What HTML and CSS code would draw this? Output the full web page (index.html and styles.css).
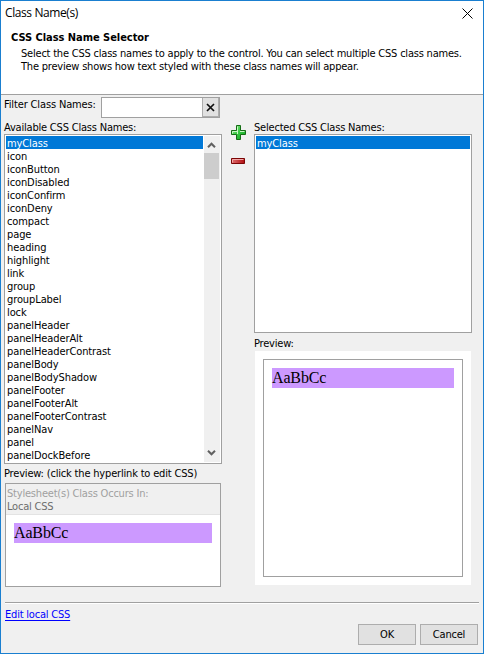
FILE: index.html
```html
<!DOCTYPE html>
<html lang="en">
<head>
<meta charset="utf-8">
<title>Class Name(s)</title>
<link rel="stylesheet" href="styles.css">
</head>
<body>
<div class="window">
  <header class="header">
    <div class="titlebar">
      <span class="title">Class Name(s)</span>
      <svg class="close" width="11" height="11" viewBox="0 0 11 11"><path d="M.5.5l10 10M10.5.5l-10 10" stroke="#000" fill="none"/></svg>
    </div>
    <h1 class="heading">CSS Class Name Selector</h1>
    <p class="intro">Select the CSS class names to apply to the control. You can select multiple CSS class names.<br>The preview shows how text styled with these class names will appear.</p>
  </header>
  <div class="filter">
    <span class="filter-label">Filter Class Names:</span>
    <div class="filter-input"><span class="clear"><svg width="9" height="9" viewBox="0 0 9 9"><path d="M1 1l7 7M8 1l-7 7" stroke="#111" stroke-width="1.7" fill="none"/></svg></span></div>
  </div>
  <main class="columns">
    <section class="left">
      <div class="label">Available CSS Class Names:</div>
      <div class="listbox available">
        <ul class="items">
          <li class="selected">myClass</li><li>icon</li><li>iconButton</li><li>iconDisabled</li><li>iconConfirm</li><li>iconDeny</li><li>compact</li><li>page</li><li>heading</li><li>highlight</li><li>link</li><li>group</li><li>groupLabel</li><li>lock</li><li>panelHeader</li><li>panelHeaderAlt</li><li>panelHeaderContrast</li><li>panelBody</li><li>panelBodyShadow</li><li>panelFooter</li><li>panelFooterAlt</li><li>panelFooterContrast</li><li>panelNav</li><li>panel</li><li>panelDockBefore</li>
        </ul>
        <div class="scrollbar">
          <svg class="arrow" width="15" height="17" viewBox="0 0 15 17"><path d="M4 11.3l3.5-3.6 3.5 3.6" stroke="#606060" stroke-width="2" fill="none"/></svg>
          <div class="thumb"></div>
          <svg class="arrow down" width="15" height="17" viewBox="0 0 15 17"><path d="M4 5.700l3.500 3.600L11 5.700" stroke="#606060" stroke-width="2" fill="none"/></svg>
        </div>
      </div>
      <div class="label hint">Preview: (click the hyperlink to edit CSS)</div>
      <div class="origin">
        <div class="origin-head"><div class="origin-title">Stylesheet(s) Class Occurs In:</div><div class="origin-name">Local CSS</div></div>
        <div class="origin-body"><div class="sample">AaBbCc</div></div>
      </div>
    </section>
    <div class="actions">
      <svg width="15" height="15" viewBox="0 0 15 15">
        <defs><linearGradient id="green" x2="1" y2="1"><stop offset="0" stop-color="#a4f0a0"/><stop offset=".45" stop-color="#3ccb45"/><stop offset="1" stop-color="#08a01c"/></linearGradient></defs>
        <path d="M5.5.5h4v5h5v4h-5v5h-4v-5h-5v-4h5z" fill="url(#green)" stroke="#146c14"/>
        <path d="M6.5 9V1.5M1.5 8.500V6.500h5M9 6.500h4.500" stroke="#c8f5c4" fill="none"/>
      </svg>
      <svg width="14" height="6" viewBox="0 0 14 6">
        <defs><linearGradient id="red" x2="1"><stop offset="0" stop-color="#e07070"/><stop offset="1" stop-color="#b00c10"/></linearGradient></defs>
        <path d="M.5.5h13v5H.5z" fill="url(#red)" stroke="#7b0505"/>
        <path d="M1.500 4.500v-3h11" stroke="#f3a9a9" fill="none"/>
      </svg>
    </div>
    <section class="right">
      <div class="label">Selected CSS Class Names:</div>
      <div class="listbox chosen"><ul class="items"><li class="selected">myClass</li></ul></div>
      <div class="label preview-label">Preview:</div>
      <div class="preview"><div class="preview-frame"><div class="sample">AaBbCc</div></div></div>
    </section>
  </main>
  <footer class="footer">
    <div><a class="link" href="#">Edit local CSS</a></div>
    <div class="buttons"><button class="ok">OK</button><button>Cancel</button></div>
  </footer>
</div>
</body>
</html>
```
FILE: styles.css
```css
* { box-sizing: border-box; }
body { margin: 0; font: 11px/13px "DejaVu Sans Condensed", "DejaVu Sans", sans-serif; font-stretch: condensed; letter-spacing: -0.2px; color: #000; }
.window { width: 484px; height: 654px; border: 1px solid #1a7fd0; background: #f0f0f0; }
.header { height: 94px; background: #fff; border-bottom: 1px solid #a0a0a0; }
.titlebar { display: flex; justify-content: space-between; height: 28px; padding: 4px 10px 0 4px; }
.title { font: 12px/16px "Open Sans", sans-serif; letter-spacing: -0.4px; }
.close { margin-top: 3px; }
.heading { margin: 2px 0 0 10px; font-size: 11px; line-height: 13px; font-weight: bold; letter-spacing: -0.04px; }
.intro { margin: 3px 0 0 20px; white-space: nowrap; letter-spacing: -0.21px; }
.filter { display: flex; height: 24px; padding: 2px 0 0 3px; }
.filter-label { width: 97px; padding-top: 1px; white-space: nowrap; letter-spacing: -0.14px; }
.filter-input { display: flex; justify-content: flex-end; width: 119px; height: 21px; border: 1px solid #a0a0a0; background: #fff; }
.clear { display: flex; align-items: center; justify-content: center; width: 17px; background: #e1e1e1; border: solid #adadad; border-width: 0 1px 1px; }
.columns { display: flex; height: 482px; padding-left: 3px; }
.left { width: 218px; }
.label { height: 15px; padding-top: 2px; white-space: nowrap; }
.listbox { width: 218px; border: 1px solid #a0a0a0; background: #fff; display: flex; padding: 1px; }
.available { height: 330px; }
.items { flex: 1; margin: 0; padding: 0; list-style: none; letter-spacing: -0.1px; }
.items li { height: 13px; padding-left: 1px; line-height: 15px; }
.items .selected { background: #0078d7; color: #fff; }
.scrollbar { display: flex; flex-direction: column; width: 16px; padding-right: 1px; margin-left: 1px; background: #f0f0f0; }
.arrow { display: block; }
.thumb { height: 26px; background: #cdcdcd; }
.down { margin-top: auto; }
.hint { height: 19px; padding-top: 3px; letter-spacing: -0.18px; }
.origin { width: 216px; height: 104px; margin-left: 1px; border: 1px solid #a0a0a0; display: flex; flex-direction: column; }
.origin-head { height: 31px; padding: 3px 0 0 1px; border-bottom: 1px solid #e3e3e3; }
.origin-title { color: #a0a0a0; }
.origin-name { color: #6d6d6d; }
.origin-body { flex: 1; padding: 8px; background: #fff; }
.sample { height: 20px; background: #cc99ff; font: 16px/20px "Liberation Serif", serif; letter-spacing: -0.15px; }
.actions { display: flex; flex-direction: column; align-items: center; width: 32px; padding-top: 6px; gap: 18px; }
.chosen { height: 199px; }
.preview-label { height: 18px; padding-top: 4px; }
.preview { width: 216px; height: 234px; margin-left: 1px; padding: 8px; background: #fff; }
.preview-frame { width: 200px; height: 218px; border: 1px solid #a0a0a0; padding: 8px; }
.footer { margin: 1px 4px 0; border-top: 1px solid #a0a0a0; box-shadow: inset 0 1px #fff; padding-top: 5px; }
.link { color: #0000ff; text-underline-offset: 2px; }
.buttons { display: flex; justify-content: flex-end; gap: 4px; margin-top: 3px; padding-right: 1px; }
button { width: 58px; height: 21px; padding: 0; border: 1px solid #adadad; background: #e1e1e1; font: inherit; letter-spacing: inherit; color: #000; }
```
